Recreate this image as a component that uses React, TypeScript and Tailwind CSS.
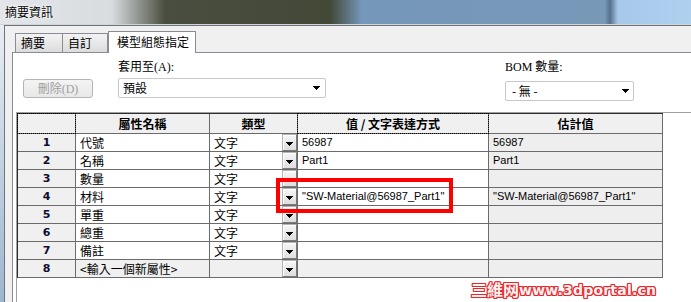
import React from "react";

const Arrow = () => (
  <svg width="7" height="4" viewBox="0 0 7 4" shapeRendering="crispEdges">
    <path d="M0 0h7v1H0zM1 1h5v1H1zM2 2h3v1H2zM3 3h1v1H3z" fill="#000" />
  </svg>
);

const rows = [
  { n: "1", name: "代號", type: "文字", val: "56987", est: "56987" },
  { n: "2", name: "名稱", type: "文字", val: "Part1", est: "Part1" },
  { n: "3", name: "數量", type: "文字", val: "", est: "" },
  { n: "4", name: "材料", type: "文字", val: "\"SW-Material@56987_Part1\"", est: "\"SW-Material@56987_Part1\"" },
  { n: "5", name: "單重", type: "文字", val: "", est: "" },
  { n: "6", name: "總重", type: "文字", val: "", est: "" },
  { n: "7", name: "備註", type: "文字", val: "", est: "" },
];

function TypeCell({ text, gray }: { text: string; gray?: boolean }) {
  return (
    <div className={`flex items-center justify-between pl-[4px] ${gray ? "bg-[#f0f0f0]" : "bg-white"}`}>
      <span>{text}</span>
      <div className="w-[15px] h-full flex items-center justify-center pt-[3px] border border-[#b4b4b4] border-r-[#7a7a7a] border-b-[#7a7a7a] bg-[linear-gradient(180deg,#f6f6f6,#dedede)] shadow-[inset_1px_1px_0_#ffffff]">
        <Arrow />
      </div>
    </div>
  );
}

export default function App() {
  return (
    <div className="relative w-[691px] h-[302px] overflow-hidden bg-white font-['Noto_Sans_CJK_TC',sans-serif] text-[12px] leading-none text-black">
      {/* title bar */}
      <div className="h-[25px] border-b border-[#d2d4d0] flex items-center pl-[5px] bg-[linear-gradient(90deg,#e2e6ea_0px,#d8dcdf_112px,#4a4e40_165px,#434837_330px,#7597b9_362px,#7898b8_605px,#56708a_610px,#a8c8ea_618px,#b0d0f0_691px)]">
        <span className="[text-shadow:0_0_5px_#ffffff,0_0_2px_#ffffff]">摘要資訊</span>
      </div>

      <div className="flex h-[277px]">
        <div className="w-[4px] bg-[linear-gradient(180deg,#e8edf2,#9db6cf)]" />
        <div className="flex-1 flex flex-col border-l border-t border-[#6b7480] bg-[#f0f0f0]">
          {/* tabs */}
          <div className="h-[26px] flex items-end pl-[10px]">
            <div className="w-[48px] h-[19px] pl-[5px] flex items-center border border-b-0 border-[#898c95] bg-[linear-gradient(180deg,#f3f3f3,#dcdcdc)]">
              摘要
            </div>
            <div className="w-[45px] h-[19px] pl-[5px] flex items-center border border-b-0 border-l-0 border-[#898c95] bg-[linear-gradient(180deg,#f3f3f3,#dcdcdc)]">
              自訂
            </div>
            <div className="relative z-10 w-[88px] h-[22px] mb-[-1px] pl-[8px] pb-[1px] flex items-center border border-b-0 border-[#898c95] bg-white">
              模型組態指定
            </div>
          </div>

          {/* panel */}
          <div className="flex-1 ml-[7px] flex flex-col border-l border-t border-[#898c95] bg-white">
            <div className="h-[59px] flex">
              <div className="ml-[10px] mt-[26px] w-[70px] h-[19px] flex items-center justify-center rounded-[3px] border border-[#b5b5b5] bg-[linear-gradient(180deg,#f4f4f4,#e8e8e8)] text-[#a0a0a0] font-['Liberation_Serif','Noto_Sans_CJK_TC',serif]">
                刪除(D)
              </div>
              <div className="ml-[25px] w-[208px] flex flex-col pt-[7px]">
                <div className="h-[13px] flex items-center font-['Liberation_Serif','Noto_Sans_CJK_TC',serif]">套用至(A):</div>
                <div className="mt-[5px] h-[20px] flex items-center justify-between pl-[4px] pr-[5px] rounded-[2px] border border-[#c5c8cf] bg-white">
                  <span>預設</span>
                  <Arrow />
                </div>
              </div>
              <div className="ml-[179px] w-[129px] flex flex-col pt-[7px]">
                <div className="h-[13px] flex items-center font-['Liberation_Serif','Noto_Sans_CJK_TC',serif]">BOM 數量:</div>
                <div className="mt-[8px] h-[20px] flex items-center justify-between pl-[6px] pr-[4px] rounded-[2px] border border-[#c5c8cf] bg-white">
                  <span>- 無 -</span>
                  <Arrow />
                </div>
              </div>
            </div>

            {/* table container */}
            <div className="flex-1 ml-[3px] border-t border-l border-[#a0a0a0]">
              <div className="w-fit border-t border-l border-[#2e2e2e]">
                <div className="grid grid-cols-[57px_133px_87px_190px_173px] grid-rows-[19px_repeat(8,17px)] gap-px pr-px pb-px bg-[#6b6b6b]">
                  {/* header */}
                  <div className="bg-[#f0f0f0] outline-1 outline-dotted outline-black" />
                  <div className="bg-[#f0f0f0] flex items-center justify-center font-bold">屬性名稱</div>
                  <div className="bg-[#f0f0f0] flex items-center justify-center font-bold">類型</div>
                  <div className="bg-[#f0f0f0] flex items-center justify-center font-bold outline-1 outline-dotted outline-black">
                    值 / 文字表達方式
                  </div>
                  <div className="bg-[#f0f0f0] flex items-center justify-center font-bold">估計值</div>

                  {rows.map((r) => (
                    <React.Fragment key={r.n}>
                      <div className="bg-[#f0f0f0] flex items-center justify-center font-bold text-[11px] text-[#0c0c34] font-['DejaVu_Sans',sans-serif]">
                        {r.n}
                      </div>
                      <div className="bg-white flex items-center pl-[4px]">{r.name}</div>
                      <TypeCell text={r.type} />
                      <div className="bg-white flex items-center pl-[4px] text-[11px] font-['Liberation_Sans',sans-serif]">{r.val}</div>
                      <div className="bg-[#eeeeee] flex items-center pl-[4px] text-[11px] font-['Liberation_Sans',sans-serif]">{r.est}</div>
                    </React.Fragment>
                  ))}

                  <div className="bg-[#f0f0f0] flex items-center justify-center font-bold text-[11px] text-[#0c0c34] font-['DejaVu_Sans',sans-serif]">
                    8
                  </div>
                  <div className="bg-[#f0f0f0] flex items-center pl-[4px]">&lt;輸入一個新屬性&gt;</div>
                  <TypeCell text="" gray />
                  <div className="bg-[#f0f0f0]" />
                  <div className="bg-[#eeeeee]" />
                </div>
              </div>
            </div>
          </div>
        </div>
      </div>

      {/* red highlight */}
      <div className="absolute left-[276px] top-[178px] w-[177px] h-[35px] border-4 border-[#ff0000]" />

      {/* watermark */}
      <div className="absolute left-[471px] top-[281px] flex items-end text-[#fff4f4] [text-shadow:1px_0_0_#e8262c,-1px_0_0_#e8262c,0_1px_0_#e8262c,0_-1px_0_#e8262c,1px_1px_0_#e8262c,-1px_-1px_0_#e8262c,1px_-1px_0_#e8262c,-1px_1px_0_#e8262c]">
        <span className="text-[16px] leading-none font-bold">三維网</span>
        <span className="text-[14px] leading-none font-bold tracking-[0.2px] font-['DejaVu_Sans',sans-serif]">www.3dportal.cn</span>
      </div>
    </div>
  );
}
